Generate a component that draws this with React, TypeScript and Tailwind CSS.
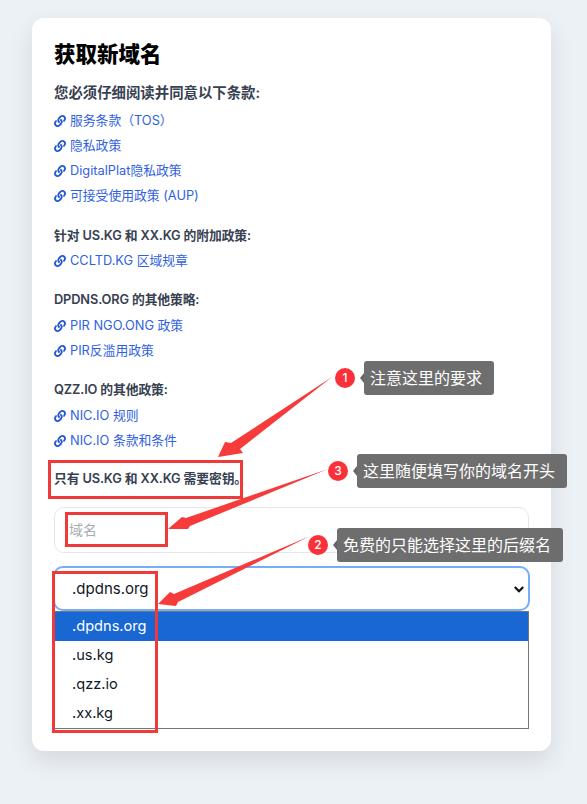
import { FaLink } from "react-icons/fa";

const font = { fontFamily: 'Inter, "Noto Sans CJK SC", sans-serif' };

function PolicyLink({ children }: { children: React.ReactNode }) {
  return (
    <a className="flex h-[25px] items-center gap-[4px] text-[12.8px] text-[#2f62e0]">
      <FaLink className="h-3 w-3 shrink-0 text-[#2456d6]" />
      <span>{children}</span>
    </a>
  );
}

function Heading({ children, className = "" }: { children: React.ReactNode; className?: string }) {
  return <p className={`flex h-[25px] items-center whitespace-pre font-semibold text-[#374151] ${className}`}>{children}</p>;
}

function Callout({ n, text, className }: { n: number; text: string; className: string }) {
  return (
    <div className={`absolute flex items-center ${className}`}>
      <span className="flex h-5 w-5 items-center justify-center rounded-full bg-[#fb3139] text-xs font-medium text-white">{n}</span>
      <span className="ml-[5px] h-0 w-0 border-y-[5px] border-r-[4px] border-y-transparent border-r-[#666666]" />
      <span className="flex h-[34px] items-center rounded-[3px] bg-[#666666]/95 pl-[6px] pr-[12px] text-base text-white">{text}</span>
    </div>
  );
}

function Arrows() {
  return (
    <svg className="pointer-events-none absolute left-0 top-0" width="587" height="804" viewBox="0 0 587 804" aria-hidden>
      <g fill="#f73a3a">
        <polygon points="332,377 240,449 243,453 218,457 225,442 231,443" />
        <polygon points="328,469 190,526 188,529 168,529 182,517 186,518" />
        <polygon points="310,536 178,602 176,606 158,604 170,592 174,594" />
      </g>
    </svg>
  );
}

export default function App() {
  return (
    <div className="relative h-[804px] w-[587px] overflow-hidden bg-[#ecf1f6]" style={font}>
      <div className="absolute left-[32px] top-[18px] h-[733px] w-[519px] rounded-xl bg-white px-[22px] pt-[22px] shadow-[0_10px_25px_rgba(0,0,0,0.1)]">
        <h1 className="flex h-7 items-center text-[21.5px] font-black text-black">获取新域名</h1>

        <Heading className="mt-[12px] mb-[3px] text-[14.4px]">您必须仔细阅读并同意以下条款:</Heading>
        <PolicyLink>服务条款（TOS）</PolicyLink>
        <PolicyLink>隐私政策</PolicyLink>
        <PolicyLink>DigitalPlat隐私政策</PolicyLink>
        <PolicyLink>可接受使用政策 (AUP)</PolicyLink>

        <Heading className="mt-[15px] text-[12.8px] tracking-[-0.01em]">针对 US.KG 和 XX.KG 的附加政策:</Heading>
        <PolicyLink>CCLTD.KG 区域规章</PolicyLink>

        <Heading className="mt-[14px] mb-[1px] text-[12.8px] tracking-[-0.01em]">DPDNS.ORG 的其他策略:</Heading>
        <PolicyLink>PIR NGO.ONG 政策</PolicyLink>
        <PolicyLink>PIR反滥用政策</PolicyLink>

        <Heading className="mt-[14px] mb-[1px] text-[12.8px] tracking-[-0.01em]">QZZ.IO 的其他政策:</Heading>
        <PolicyLink>NIC.IO 规则</PolicyLink>
        <PolicyLink>NIC.IO 条款和条件</PolicyLink>

        <Heading className="mt-[13px] text-[12.8px] tracking-[-0.01em]">只有 US.KG 和 XX.KG 需要密钥。</Heading>

        <div className="mt-[16px] flex h-[46px] items-center rounded-[10px] border border-[#e5e7eb] px-[14px] text-sm text-[#a8adb5]">域名</div>

        <div className="mt-[13px] -ml-px -mr-px flex h-[45px] items-center justify-between rounded-[10px] border-2 border-[#75aef8] bg-white pl-[17px] pr-[3px] text-[15px] text-[#111827]">
          <span className="pt-[2px]">.dpdns.org</span>
          <svg className="h-3 w-3" viewBox="0 0 12 12" fill="none" stroke="#111" strokeWidth="2.2" aria-hidden>
            <path d="M1.8 4l4.2 4.2L10.2 4" />
          </svg>
        </div>
        <ul className="h-[118px] border border-[#767676] bg-white text-[14.6px] text-[#111827]">
          <li className="flex h-[29px] items-center bg-[#1967d2] pl-[17px] text-white">.dpdns.org</li>
          <li className="flex h-[29px] items-center pl-[17px]">.us.kg</li>
          <li className="flex h-[29px] items-center pl-[17px]">.qzz.io</li>
          <li className="flex h-[29px] items-center pl-[17px]">.xx.kg</li>
        </ul>
      </div>

      <Arrows />
      <div className="absolute left-[48px] top-[460px] h-[39px] w-[195px] border-[3px] border-[#f03a3a]" />
      <div className="absolute left-[65px] top-[512px] h-[35px] w-[103px] border-[3px] border-[#f03a3a]" />
      <div className="absolute left-[52px] top-[571px] h-[162px] w-[106px] border-[3px] border-[#f03a3a]" />

      <Callout n={1} text="注意这里的要求" className="left-[335px] top-[361px]" />
      <Callout n={3} text="这里随便填写你的域名开头" className="left-[328px] top-[454px]" />
      <Callout n={2} text="免费的只能选择这里的后缀名" className="left-[308px] top-[528px]" />
    </div>
  );
}
